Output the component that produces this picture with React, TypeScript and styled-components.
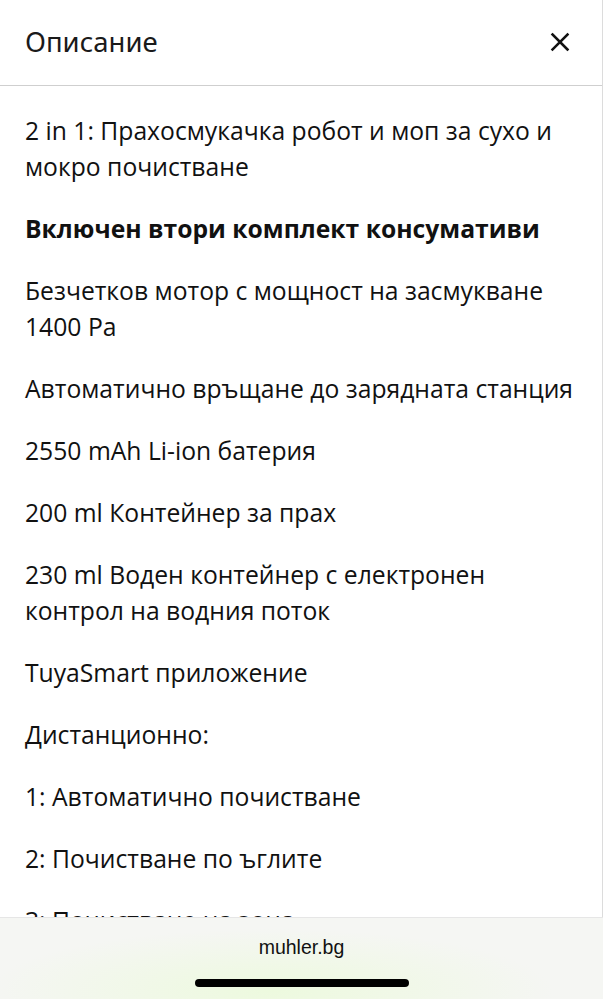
import React from "react";
import { createGlobalStyle, styled } from "styled-components";

const GlobalStyle = createGlobalStyle`
  html, body {
    margin: 0;
    padding: 0;
    background: #ffffff;
  }
  body {
    font-family: "Open Sans", "Noto Sans", sans-serif;
    color: #111111;
  }
`;

const items: { text: string; bold?: boolean }[] = [
  { text: "2 in 1: Прахосмукачка робот и моп за сухо и мокро почистване" },
  { text: "Включен втори комплект консумативи", bold: true },
  { text: "Безчетков мотор с мощност на засмукване 1400 Pa" },
  { text: "Автоматично връщане до зарядната станция" },
  { text: "2550 mAh Li-ion батерия" },
  { text: "200 ml Контейнер за прах" },
  { text: "230 ml Воден контейнер с електронен контрол на водния поток" },
  { text: "TuyaSmart приложение" },
  { text: "Дистанционно:" },
  { text: "1: Автоматично почистване" },
  { text: "2: Почистване по ъглите" },
  { text: "3: Почистване на зона" },
  { text: "4: Почистване по график" },
];

const App: React.FC = () => {
  return (
    <>
      <GlobalStyle />
      <StyledPanel>
        <StyledHeader>
          <StyledTitle>Описание</StyledTitle>
          <StyledClose aria-label="close">
            <svg width="20" height="20" viewBox="0 0 20 20" fill="none">
              <path
                d="M2.5 2.5 L17.5 17.5 M17.5 2.5 L2.5 17.5"
                stroke="#111"
                strokeWidth="2.5"
                strokeLinecap="square"
              />
            </svg>
          </StyledClose>
        </StyledHeader>
        <StyledBody>
          {items.map((item) => (
            <StyledItem key={item.text} $bold={item.bold}>
              {item.text}
            </StyledItem>
          ))}
        </StyledBody>
      </StyledPanel>
      <StyledBrowserBar>
        <StyledUrl>muhler.bg</StyledUrl>
        <StyledHomeIndicator />
      </StyledBrowserBar>
    </>
  );
};

const StyledPanel = styled.div`
  height: 999px;
  overflow: hidden;
  border-right: 1px solid #dcdcdc;
  box-sizing: border-box;
`;

const StyledHeader = styled.div`
  height: 85px;
  display: flex;
  align-items: center;
  justify-content: space-between;
  padding: 0 32px 0 25px;
  border-bottom: 1px solid #cfcfcf;
`;

const StyledTitle = styled.h1`
  margin: 0 0 3px 0;
  font-family: "Noto Sans", "Open Sans", sans-serif;
  font-size: 27.5px;
  font-weight: 400;
  color: #1a1a1a;
`;

const StyledClose = styled.button`
  display: flex;
  align-items: center;
  justify-content: center;
  padding: 0;
  margin-bottom: 2px;
  border: none;
  background: none;
  cursor: pointer;
`;

const StyledBody = styled.div`
  padding: 27px 25px 0 25px;
`;

const StyledItem = styled.p<{ $bold?: boolean }>`
  margin: 0 0 26px 0;
  font-size: 24.7px;
  line-height: 36px;
  font-weight: ${(p) => (p.$bold ? 700 : 400)};
  color: #111111;
`;

const StyledBrowserBar = styled.div`
  position: fixed;
  left: 0;
  right: 0;
  bottom: 0;
  height: 82px;
  border-top: 1px solid #e6e6e6;
  background: radial-gradient(
      ellipse at 45% 90%,
      rgba(236, 250, 220, 0.9) 0%,
      rgba(244, 246, 241, 0) 60%
    ),
    #f5f6f3;
  display: flex;
  flex-direction: column;
  align-items: center;
  padding-top: 18px;
  box-sizing: border-box;
`;

const StyledUrl = styled.div`
  font-family: "Liberation Sans", Arial, sans-serif;
  font-size: 19.5px;
  color: #111111;
`;

const StyledHomeIndicator = styled.div`
  margin-top: 20px;
  width: 214px;
  height: 8px;
  border-radius: 4px;
  background: #000000;
`;

export default App;
